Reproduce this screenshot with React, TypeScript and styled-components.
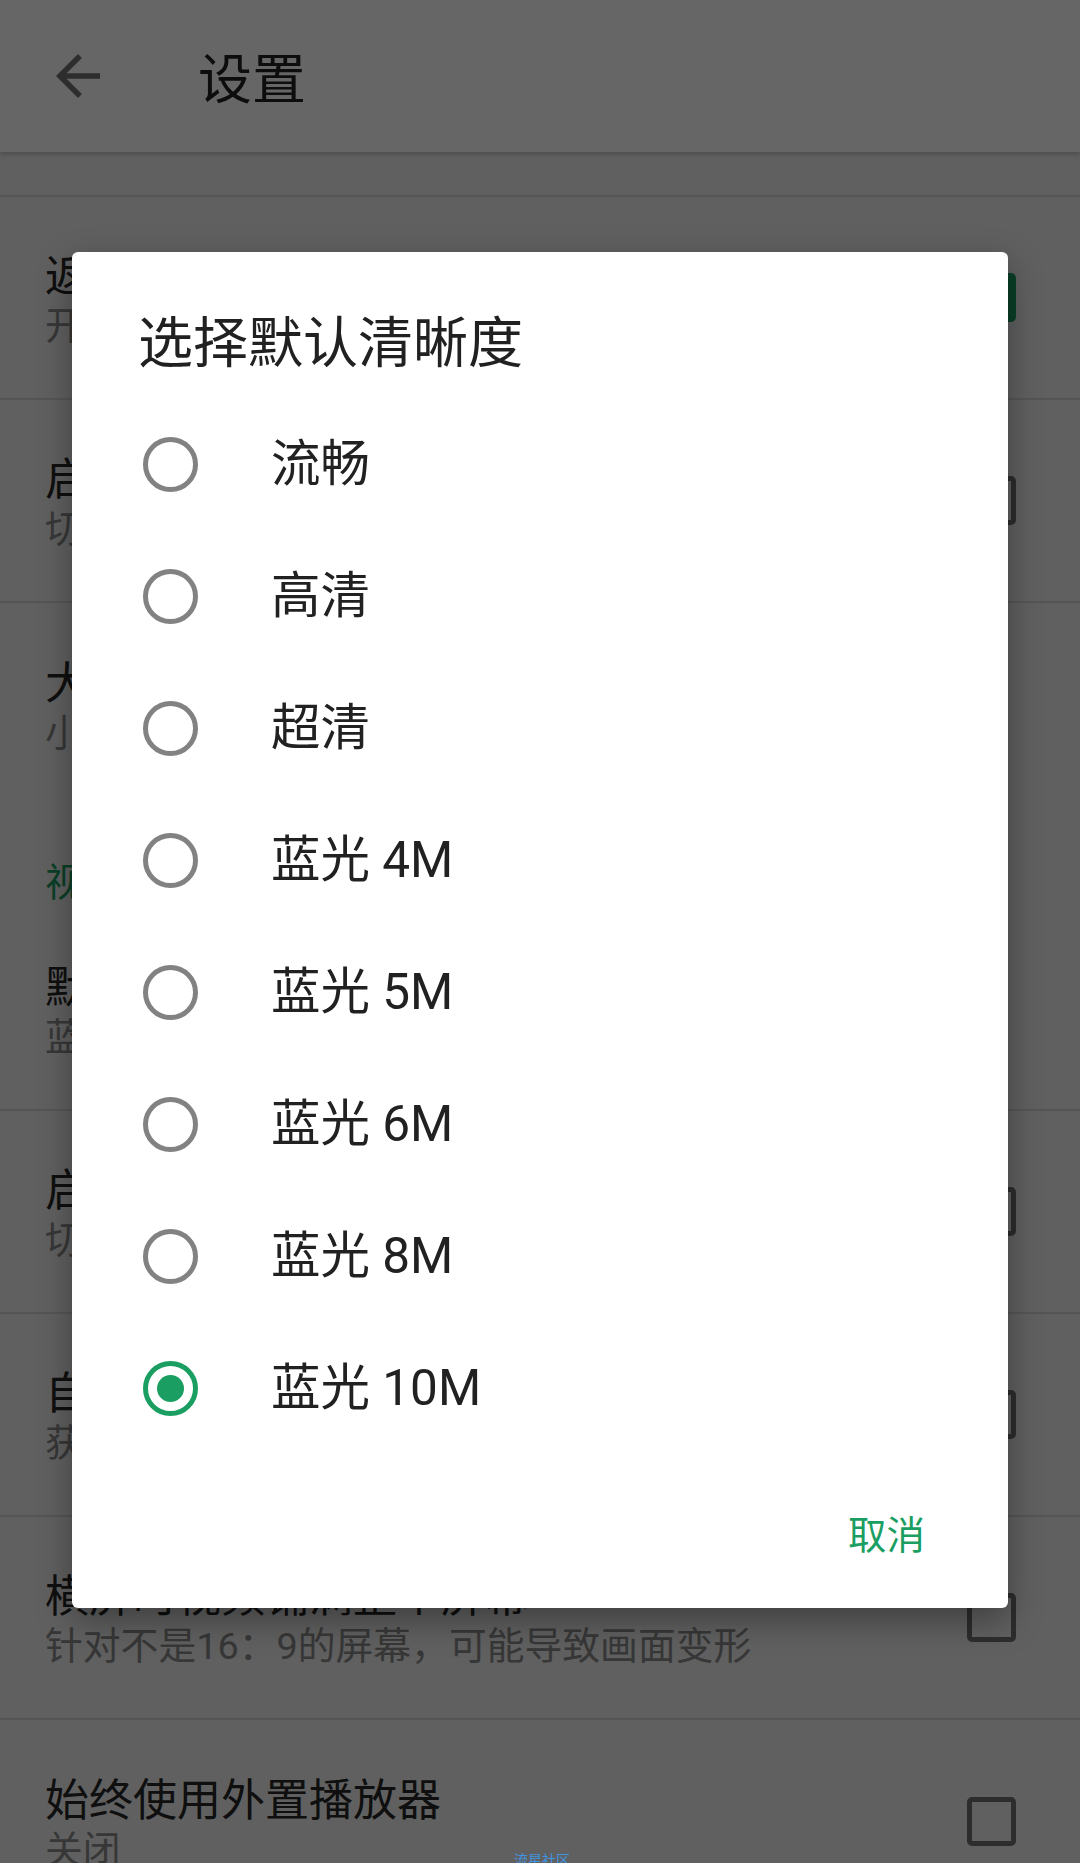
import React from "react";
import styled, { createGlobalStyle } from "styled-components";

const GlobalStyle = createGlobalStyle`
  html, body { margin: 0; padding: 0; }
  body {
    font-family: Roboto, "Noto Sans CJK SC", sans-serif;
    background: #efefef;
  }
  * { box-sizing: border-box; }
`;

const GREEN = "#1a9e62";

const Screen = styled.div`
  position: relative;
  width: 1080px;
  height: 1863px;
  overflow: hidden;
  background: #efefef;
  font-family: Roboto, "Noto Sans CJK SC", sans-serif;
`;

const AppBar = styled.header`
  position: relative;
  z-index: 1;
  height: 152px;
  display: flex;
  align-items: center;
  padding-left: 45px;
  background: #ffffff;
  box-shadow: 0 2px 5px rgba(0, 0, 0, 0.22);
`;

const BackIcon = styled.svg`
  width: 66px;
  height: 66px;
  flex: none;
  fill: #707070;
`;

const AppTitle = styled.h1`
  margin: 0 0 0 87px;
  font: 400 54px/64px "Noto Sans CJK SC", sans-serif;
  color: #222222;
`;

const List = styled.div`
  display: flex;
  flex-direction: column;
`;

const TopGap = styled.div`
  height: 45px;
  border-bottom: 2px solid #d4d4d4;
`;

const PrefRow = styled.div<{ $divider?: boolean }>`
  height: 203px;
  display: flex;
  align-items: center;
  justify-content: space-between;
  padding: 0 64px 0 45px;
  border-bottom: ${(p) => (p.$divider ? "2px solid #d4d4d4" : "none")};
`;

const PrefText = styled.div`
  display: flex;
  flex-direction: column;
`;

const PrefTitle = styled.div`
  font: 400 44px/56px "Noto Sans CJK SC", sans-serif;
  color: #262626;
  white-space: nowrap;
`;

const PrefSummary = styled.div`
  font: 400 37.8px/50px Roboto, "Noto Sans CJK SC", sans-serif;
  color: #8a8a8a;
  white-space: nowrap;
`;

const Category = styled.div`
  height: 102px;
  padding: 48px 0 0 45px;
  font: 400 38.5px/50px "Noto Sans CJK SC", sans-serif;
  color: ${GREEN};
`;

const CheckBox = styled.span<{ $checked?: boolean }>`
  width: 49px;
  height: 49px;
  flex: none;
  display: flex;
  align-items: center;
  justify-content: center;
  border-radius: 5px;
  border: ${(p) => (p.$checked ? "none" : "5.5px solid #727272")};
  background: ${(p) => (p.$checked ? GREEN : "transparent")};
`;

const CheckMark = styled.svg`
  width: 40px;
  height: 40px;
  fill: #ffffff;
`;

const Scrim = styled.div`
  position: absolute;
  inset: 0;
  z-index: 2;
  background: rgba(0, 0, 0, 0.6);
  display: flex;
  align-items: center;
  justify-content: center;
`;

const Dialog = styled.div`
  width: 936px;
  margin-top: -3px;
  display: flex;
  flex-direction: column;
  background: #ffffff;
  border-radius: 6px;
  box-shadow: 0 12px 34px rgba(0, 0, 0, 0.35);
`;

const DialogTitle = styled.h2`
  margin: 0;
  padding: 54px 66px 28px;
  font: 400 55px/64px "Noto Sans CJK SC", sans-serif;
  color: #212121;
`;

const Options = styled.div`
  display: flex;
  flex-direction: column;
`;

const Option = styled.div`
  height: 132px;
  display: flex;
  align-items: center;
  padding-left: 71px;
  gap: 73px;
`;

const Radio = styled.span<{ $checked?: boolean }>`
  width: 55px;
  height: 55px;
  flex: none;
  border-radius: 50%;
  border: 5.5px solid ${(p) => (p.$checked ? GREEN : "#828282")};
  display: flex;
  align-items: center;
  justify-content: center;
  &::after {
    content: "";
    display: ${(p) => (p.$checked ? "block" : "none")};
    width: 27px;
    height: 27px;
    border-radius: 50%;
    background: ${GREEN};
  }
`;

const OptionLabel = styled.span`
  font: 400 49.5px/60px Roboto, "Noto Sans CJK SC", sans-serif;
  color: #212121;
`;

const Actions = styled.div`
  display: flex;
  justify-content: flex-end;
  padding: 56px 83px 54px 0;
`;

const TextButton = styled.span`
  font: 400 38.5px/44px "Noto Sans CJK SC", sans-serif;
  color: ${GREEN};
`;

const Watermark = styled.div`
  position: absolute;
  z-index: 3;
  left: 514px;
  bottom: -5px;
  font: 400 14px/18px "Noto Sans CJK SC", sans-serif;
  color: #3f95e0;
`;

type Pref = {
  title: string;
  summary: string;
  check?: "on" | "off";
  divider?: boolean;
};

const groupA: Pref[] = [
  { title: "返回键直接退出", summary: "开启后按返回键直接退出应用", check: "on", divider: true },
  { title: "启用硬件解码", summary: "切换后需重新打开视频生效", check: "off", divider: true },
  { title: "大屏幕界面", summary: "小屏幕设备不建议开启", divider: false },
];

const groupB: Pref[] = [
  { title: "默认清晰度", summary: "蓝光 10M", divider: true },
  { title: "启用弹幕", summary: "切换后需重新打开视频生效", check: "off", divider: true },
  { title: "自动播放下一集", summary: "获取失败时不会自动播放", check: "off", divider: true },
  { title: "横屏时视频铺满整个屏幕", summary: "针对不是16：9的屏幕，可能导致画面变形", check: "off", divider: true },
  { title: "始终使用外置播放器", summary: "关闭", check: "off", divider: false },
];

const qualities = ["流畅", "高清", "超清", "蓝光 4M", "蓝光 5M", "蓝光 6M", "蓝光 8M", "蓝光 10M"];
const selected = "蓝光 10M";

function PrefItem({ p }: { p: Pref }) {
  return (
    <PrefRow $divider={p.divider}>
      <PrefText>
        <PrefTitle>{p.title}</PrefTitle>
        <PrefSummary>{p.summary}</PrefSummary>
      </PrefText>
      {p.check && (
        <CheckBox $checked={p.check === "on"}>
          {p.check === "on" && (
            <CheckMark viewBox="0 0 24 24">
              <path d="M9 16.17L4.83 12l-1.42 1.41L9 19 21 7l-1.41-1.41z" />
            </CheckMark>
          )}
        </CheckBox>
      )}
    </PrefRow>
  );
}

export default function App() {
  return (
    <>
      <GlobalStyle />
      <Screen>
        <AppBar>
          <BackIcon viewBox="0 0 24 24">
            <path d="M20 11H7.83l5.59-5.59L12 4l-8 8 8 8 1.41-1.41L7.83 13H20v-2z" />
          </BackIcon>
          <AppTitle>设置</AppTitle>
        </AppBar>
        <List>
          <TopGap />
          {groupA.map((p) => (
            <PrefItem key={p.title} p={p} />
          ))}
          <Category>视频设置</Category>
          {groupB.map((p) => (
            <PrefItem key={p.title} p={p} />
          ))}
        </List>
        <Scrim>
          <Dialog>
            <DialogTitle>选择默认清晰度</DialogTitle>
            <Options>
              {qualities.map((q) => (
                <Option key={q}>
                  <Radio $checked={q === selected} />
                  <OptionLabel>{q}</OptionLabel>
                </Option>
              ))}
            </Options>
            <Actions>
              <TextButton>取消</TextButton>
            </Actions>
          </Dialog>
        </Scrim>
        <Watermark>流星社区</Watermark>
      </Screen>
    </>
  );
}
